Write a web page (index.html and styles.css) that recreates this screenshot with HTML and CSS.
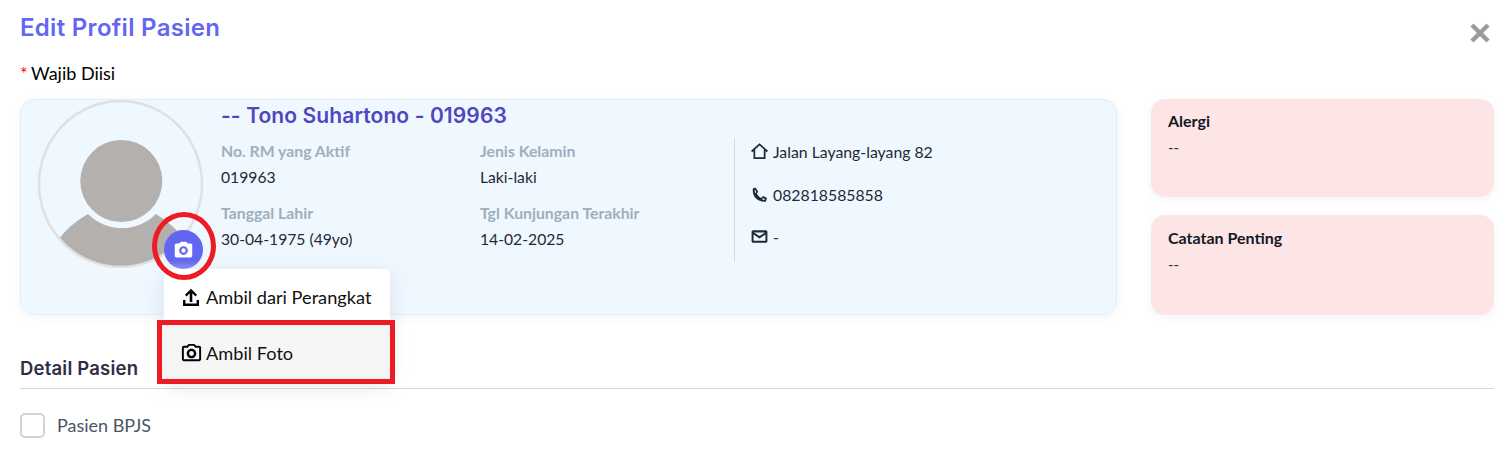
FILE: index.html
```html
<!DOCTYPE html>
<html lang="id">
<head>
<meta charset="utf-8">
<title>Edit Profil Pasien</title>
<link rel="stylesheet" href="styles.css">
</head>
<body>
<main class="modal">
  <header class="modal-head">
    <h1 class="title">Edit Profil Pasien</h1>
    <svg class="close" viewBox="0 0 20 20"><path d="M2 2 18 18M18 2 2 18"/></svg>
  </header>
  <p class="required"><span class="star">*</span> Wajib Diisi</p>
  <section class="top-row">
    <div class="patient-card">
      <svg class="avatar" viewBox="0 0 166 168">
        <defs><clipPath id="av"><ellipse cx="82.500" cy="84" rx="81.500" ry="83"/></clipPath></defs>
        <circle class="avatar-head" cx="83.300" cy="81" r="41"/>
        <path class="avatar-head" clip-path="url(#av)" d="M20 140Q32 124 50 114A48 48 0 0 0 118 114Q134 124 148 140V170H20Z"/>
        <ellipse class="avatar-ring" cx="82.500" cy="84" rx="81.500" ry="83"/>
      </svg>
      <div class="info">
        <h2 class="name">-- Tono Suhartono - 019963</h2>
        <div class="info-body">
          <div class="fields">
            <div class="field"><div class="label">No. RM yang Aktif</div><div class="value">019963</div></div>
            <div class="field"><div class="label">Jenis Kelamin</div><div class="value">Laki-laki</div></div>
            <div class="field"><div class="label">Tanggal Lahir</div><div class="value">30-04-1975 (49yo)</div></div>
            <div class="field"><div class="label">Tgl Kunjungan Terakhir</div><div class="value">14-02-2025</div></div>
          </div>
          <div class="contacts">
            <div class="contact">
              <svg class="contact-icon" viewBox="0 0 24 24"><path class="home-line" d="M2 12 12 3l10 9M5.500 10v10.500h13V10"/></svg>
              <span>Jalan Layang-layang 82</span>
            </div>
            <div class="contact">
              <svg class="contact-icon" viewBox="0 0 24 24"><path d="M7 3 3.500 4.500C3 11 5 15 8 17.500c3 2.800 7 4 12 3.500l1.500-4.500-5-2.500-2.500 2.300c-2.500-1-4.500-3.300-5.300-5.800L10.500 8.500zM6.300 5.800 7.800 8.800 6.800 10.500C6 9 5.800 7.500 6.300 5.800zM15 17.700l1.800-1 2 1-.6 1.300c-1.200 0-2.200-.5-3.200-1.300z"/></svg>
              <span>082818585858</span>
            </div>
            <div class="contact">
              <svg class="contact-icon" viewBox="0 0 24 24"><path d="M22 6c0-1.100-.9-2-2-2H4c-1.100 0-2 .9-2 2v12c0 1.100.9 2 2 2h16c1.100 0 2-.9 2-2V6zm-3 1-7 4.500L5 7h14zm0.500 10.500H4.500V9.500l7.500 5 7.500-5v8z"/></svg>
              <span>-</span>
            </div>
          </div>
        </div>
      </div>
      <button class="camera-btn" type="button">
        <svg viewBox="0 0 24 24"><path d="M20 4h-3.170L15 2H9L7.170 4H4c-1.100 0-2 .9-2 2v12c0 1.100.9 2 2 2h16c1.100 0 2-.9 2-2V6c0-1.100-.9-2-2-2zM12 17c-2.760 0-5-2.240-5-5s2.240-5 5-5 5 2.240 5 5-2.240 5-5 5zm0-7.500a2.500 2.500 0 1 0 0 5 2.500 2.500 0 0 0 0-5z"/></svg>
      </button>
      <div class="menu">
        <div class="menu-item">
          <svg class="menu-icon" viewBox="0 0 24 24"><path d="M10.700 17V8.200L7.500 11.400 6 9.700l6-6 6 6-1.500 1.700-3.200-3.200V17zM4 15h2.400v3.600h11.200V15H20v6H4z"/></svg>
          <span>Ambil dari Perangkat</span>
        </div>
        <div class="menu-item menu-item-active">
          <svg class="menu-icon-cam" viewBox="0 0 24 24"><path d="M20 4h-3.170L15 2H9L7.170 4H4c-1.100 0-2 .9-2 2v12c0 1.100.9 2 2 2h16c1.100 0 2-.9 2-2V6c0-1.100-.9-2-2-2zm0 14H4V6h4.050l1.830-2h4.240l1.830 2H20v12zM12 7c-2.760 0-5 2.240-5 5s2.240 5 5 5 5-2.240 5-5-2.240-5-5-5zm0 7.500a2.500 2.500 0 1 1 0-5 2.500 2.500 0 0 1 0 5z"/></svg>
          <span>Ambil Foto</span>
        </div>
        <span class="mark-box"></span>
      </div>
      <span class="mark-ring"></span>
    </div>
    <aside class="notes">
      <div class="note note-first"><div class="note-title">Alergi</div><div class="note-text">--</div></div>
      <div class="note"><div class="note-title">Catatan Penting</div><div class="note-text">--</div></div>
    </aside>
  </section>
  <h3 class="section-title">Detail Pasien</h3>
  <label class="check"><span class="check-box"></span><span>Pasien BPJS</span></label>
</main>
</body>
</html>
```

FILE: styles.css
```css
* { box-sizing: border-box; }
html, body { margin: 0; padding: 0; background: #fff; }
body { font-family: "Lato", "Liberation Sans", sans-serif; color: #1f2937; overflow: hidden; height: 452px; }
.modal { padding: 10px 16px 0 20px; }
.modal-head { display: flex; justify-content: space-between; align-items: flex-start; height: 51px; }
.title { margin: 0; font-family: "Inter", "Liberation Sans", sans-serif; font-weight: 600; font-size: 24px; line-height: 36px; color: #6366f1; letter-spacing: .3px; }
.close { width: 20px; height: 20px; margin: 13px 4px 0 0; }
.close path { fill: none; stroke: #9b9b9b; stroke-width: 4.500; }
.required { margin: 0; height: 38px; font-size: 18px; line-height: 24px; color: #000; }
.star { color: #f00; margin-right: -1px; }
.top-row { display: flex; gap: 34px; }
.patient-card { position: relative; flex: 0 0 1097px; height: 216px; display: flex; padding: 1px 0 0 18px; background: #eff7ff; border: 1px solid #e0eefc; border-radius: 14px; box-shadow: 0 2px 8px rgba(100,116,139,.08); }
.avatar { flex: 0 0 166px; width: 166px; height: 168px; margin-top: -1px; margin-left: -1px; }
.avatar-head { fill: #b3b0ae; }
.avatar-ring { fill: none; stroke: #e0e0e0; stroke-width: 2.500; }
.info { margin-left: 17px; flex: 1; }
.name { margin: 0; font-family: "Inter", "Liberation Sans", sans-serif; font-weight: 600; font-size: 21px; line-height: 30px; color: #4f46c0; letter-spacing: .1px; }
.info-body { display: flex; margin-top: 7px; }
.fields { display: grid; grid-template-columns: 259px 254px; grid-auto-rows: 62px; }
.label { font-size: 15.800px; line-height: 26px; font-weight: 700; color: #a0aec0; }
.value { font-size: 15.700px; line-height: 26px; color: #1f2937; }
.contacts { width: 300px; height: 124px; border-left: 1px solid #d6d9dc; padding-left: 15px; }
.contact { display: flex; align-items: flex-start; gap: 4px; height: 42.500px; font-size: 15.800px; line-height: 28px; color: #1f2937; }
.contact-icon { flex: none; width: 19px; height: 19px; margin-top: 4px; fill: #1e293b; }
.home-line { fill: none; stroke: #1e293b; stroke-width: 2.200; }
.camera-btn { position: absolute; left: 143px; top: 130px; width: 39px; height: 39px; padding: 1px 0 0; border: 0; border-radius: 50%; background: linear-gradient(#6366f1 78%, #8d90f3); display: flex; align-items: center; justify-content: center; }
.camera-btn svg { width: 21px; height: 21px; fill: #fff; }
.mark-ring { position: absolute; left: 131px; top: 112px; width: 64px; height: 68px; border: 5px solid #ed1c24; border-radius: 50%; }
.menu { position: absolute; left: 143px; top: 169px; width: 226px; background: #fff; border-radius: 5px; box-shadow: 0 6px 20px rgba(100,116,139,.16); }
.menu-item { display: flex; align-items: center; gap: 3px; height: 56px; padding-left: 15px; font-size: 18.200px; color: #111; }
.menu-item-active { background: #f5f5f5; margin-left: -3px; padding-left: 19px; }
.menu-icon { width: 24px; height: 24px; fill: #000; }
.menu-icon-cam { width: 23px; height: 23px; fill: #000; }
.mark-box { position: absolute; left: -7px; top: 51px; width: 238px; height: 64px; border: 5px solid #ed1c24; }
.notes { flex: 0 0 343px; display: flex; flex-direction: column; gap: 18px; }
.note { flex: 1; padding: 12px 17px; background: #fee5e5; border-radius: 14px; box-shadow: 0 2px 8px rgba(100,116,139,.08); }
.note-first { flex: 0 0 98px; padding-top: 11px; }
.note-title { font-size: 16px; line-height: 22px; font-weight: 700; color: #111827; }
.note-text { margin-top: 4px; font-size: 15px; line-height: 22px; color: #333; }
.section-title { margin: 39px 0 0; height: 35px; border-bottom: 1px solid #d5d8dc; font-family: "Inter", "Liberation Sans", sans-serif; font-weight: 600; font-size: 18.500px; line-height: 28px; color: #2d2d44; letter-spacing: .2px; }
.check { display: flex; align-items: center; gap: 12px; margin-top: 24px; font-size: 18px; line-height: 25px; color: #4b5563; }
.check-box { width: 25px; height: 25px; border: 2px solid #cbd5e1; border-radius: 5px; background: #fff; }
```
